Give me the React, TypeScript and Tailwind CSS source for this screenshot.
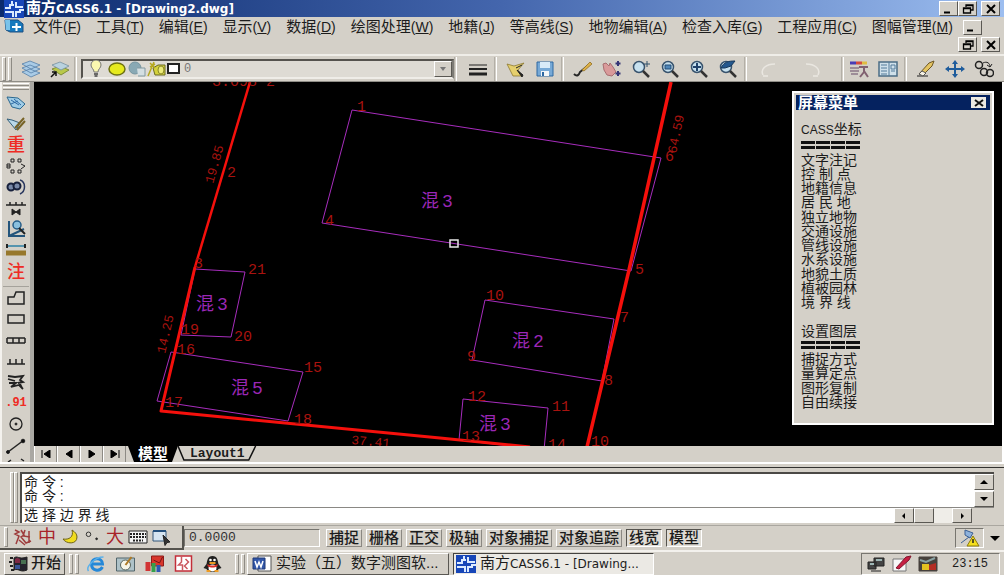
import { ReactNode } from "react";
import clsx from "clsx";

const menus: { name: string; hotkey: string }[] = [
	{ name: "文件", hotkey: "F" },
	{ name: "工具", hotkey: "T" },
	{ name: "编辑", hotkey: "E" },
	{ name: "显示", hotkey: "V" },
	{ name: "数据", hotkey: "D" },
	{ name: "绘图处理", hotkey: "W" },
	{ name: "地籍", hotkey: "J" },
	{ name: "等高线", hotkey: "S" },
	{ name: "地物编辑", hotkey: "A" },
	{ name: "检查入库", hotkey: "G" },
	{ name: "工程应用", hotkey: "C" },
	{ name: "图幅管理", hotkey: "M" },
];

const layerItems = [
	"文字注记",
	"控 制 点",
	"地籍信息",
	"居 民 地",
	"独立地物",
	"交通设施",
	"管线设施",
	"水系设施",
	"地貌土质",
	"植被园林",
	"境 界 线",
];

const settingItems = ["捕捉方式", "量算定点", "图形复制", "自由续接"];

const modes = [
	{ name: "捕捉", on: false },
	{ name: "栅格", on: false },
	{ name: "正交", on: false },
	{ name: "极轴", on: false },
	{ name: "对象捕捉", on: false },
	{ name: "对象追踪", on: false },
	{ name: "线宽", on: true },
	{ name: "模型", on: true },
];

const buildings = [
	{ points: "352,110 661,158 631,271 322,223", label: "混3", x: 421, y: 207 },
	{ points: "195,269 245,272 231,337 181,335", label: "混3", x: 196, y: 310 },
	{ points: "171,352 303,372 288,421 157,401", label: "混5", x: 231, y: 394 },
	{ points: "485,300 614,319 602,381 472,360", label: "混2", x: 512, y: 347 },
	{ points: "463,399 548,408 544,450 459,440", label: "混3", x: 479, y: 430 },
];

const pointLabels: [string, number, number][] = [
	["1", 357, 111],
	["4", 325, 225],
	["6", 665, 161],
	["5", 635, 274],
	["7", 620, 322],
	["8", 604, 385],
	["9", 467, 361],
	["10", 486, 300],
	["11", 552, 411],
	["12", 468, 401],
	["13", 462, 441],
	["14", 548, 449],
	["10", 591, 446],
	["15", 304, 372],
	["16", 177, 354],
	["17", 165, 407],
	["18", 294, 424],
	["19", 181, 334],
	["20", 234, 341],
	["21", 248, 274],
	["3", 194, 268],
	["2", 227, 177],
];

const raised =
	"border border-t-white border-l-white border-r-[#5a5853] border-b-[#5a5853] bg-[#d4d0c8]";
const sunken =
	"border border-t-[#77756f] border-l-[#77756f] border-r-white border-b-white";

function Icon({ children, className }: { children: ReactNode; className?: string }) {
	return (
		<svg
			viewBox="0 0 20 18"
			fill="none"
			stroke="#222"
			className={clsx("h-[18px] w-5 shrink-0", className)}
			aria-hidden="true"
		>
			{children}
		</svg>
	);
}

function CassLogo() {
	return (
		<Icon className="h-4">
			<rect width="20" height="18" fill="#1746b8" stroke="none" />
			<path d="M1 8h5V5h4M8 1v5M12 2v5h7M1 12h8v5M12 11v6M12 12h4v-2h4" stroke="#dbeaff" strokeWidth="2" />
		</Icon>
	);
}

function WindowButton({ kind, label }: { kind: "min" | "restore" | "close"; label: string }) {
	return (
		<button aria-label={label} className={clsx(raised, "flex h-[15px] w-[19px] items-center justify-center")}>
			<svg viewBox="0 0 12 10" className="h-2.5 w-3" fill="none" stroke="#000">
				{kind === "min" && <path d="M1 8.5h6" strokeWidth="2" />}
				{kind === "restore" && (
					<path d="M4 3V1h7v5H9M4 1.5h7M1.500 4h7v5h-7zM1.500 4.500h7" strokeWidth="1.300" />
				)}
				{kind === "close" && <path d="M2 1l8 8M10 1L2 9" strokeWidth="2" />}
			</svg>
		</button>
	);
}

function TitleBar() {
	return (
		<header className="flex h-[17px] shrink-0 items-center bg-linear-to-r from-[#0b2a6d] via-[#4466ad] to-[#9dbef0] pr-1 pl-1 text-white">
			<CassLogo />
			<h1 className="ml-0.5 flex-1 text-[15px] leading-4 font-bold whitespace-nowrap">
				南方<span className="font-['DejaVu_Sans'] text-xs">CASS6.1 - [Drawing2.dwg]</span>
			</h1>
			<WindowButton kind="min" label="最小化" />
			<WindowButton kind="restore" label="还原" />
			<span className="w-1" />
			<WindowButton kind="close" label="关闭" />
		</header>
	);
}

function MenuBar() {
	return (
		<nav className="flex shrink-0 flex-col pb-px pl-1">
			<div className="flex h-5 items-center">
				<Icon>
					<path d="M1 2h13l5 4v8H6L2 12z" fill="#1679bd" stroke="#1c4f80" />
					<path d="M1 2h5v10H2z" fill="#79c3ea" stroke="none" />
					<path d="M8 9h9M12.500 5v8" stroke="#fff" strokeWidth="2" />
				</Icon>
				<ul className="ml-[9px] flex gap-[15px]">
					{menus.map((menu) => (
						<li key={menu.name}>
							<button className="text-[15px] leading-5 whitespace-nowrap">
								{menu.name}
								<span className="text-sm">
									(<u>{menu.hotkey}</u>)
								</span>
							</button>
						</li>
					))}
				</ul>
				<span className="ml-2.5">
					<WindowButton kind="min" label="最小化图形" />
				</span>
			</div>
			<div className="flex h-4 justify-end gap-1 pr-1">
				<WindowButton kind="restore" label="还原图形" />
				<WindowButton kind="close" label="关闭图形" />
			</div>
		</nav>
	);
}

function Divider() {
	return <span className="h-6 w-[3px] shrink-0 border-r border-l border-r-white border-l-[#b3afa7]" />;
}

function Grip({ className }: { className?: string }) {
	return (
		<span
			className={clsx(
				"w-1 shrink-0 border border-t-white border-r-[#8e8b84] border-b-[#8e8b84] border-l-white",
				className
			)}
		/>
	);
}

function ToolButton({ label, children }: { label: string; children: ReactNode }) {
	return (
		<button aria-label={label} className="flex h-6 w-[29px] shrink-0 items-center justify-center">
			<Icon>{children}</Icon>
		</button>
	);
}

function Lens({ children }: { children?: ReactNode }) {
	return (
		<>
			<circle cx="8" cy="7" r="5.500" fill="#c7e1ef" stroke="#38536d" strokeWidth="1.500" />
			<path d="M12 11l6 6" stroke="#333" strokeWidth="2.500" />
			{children}
		</>
	);
}

function Toolbar() {
	return (
		<div className="flex h-7 shrink-0 items-center overflow-hidden border-t-2 border-t-[#efede8] border-b border-b-[#8f8d87]">
			<Grip className="ml-0.5 h-6" />
			<Grip className="ml-0.5 h-6" />
			<span className="w-1" />
			<ToolButton label="图层">
				<path d="M1 12l8-3 10 4-9 4zM1 8l8-3 10 4-9 4zM1 4l8-3 10 4-9 4z" fill="#a9cbe6" stroke="#557fa8" strokeWidth=".8" />
			</ToolButton>
			<ToolButton label="上一图层">
				<path d="M2 9l8-3 9 4-8 5z" fill="#b9c84a" stroke="#6f7f2a" strokeWidth=".8" />
				<path d="M2 5l8-3 9 4-8 4z" fill="#b9d2df" stroke="#76909f" strokeWidth=".8" />
				<path d="M1 17l5-5M2 12h4v4" stroke="#111" strokeWidth="1.500" />
			</ToolButton>
			<Divider />
			<div className="ml-1 flex h-5 w-[373px] shrink-0 items-center border-2 border-t-[#55534e] border-r-[#7d7b75] border-b-[#efede8] border-l-[#55534e] bg-[#dedbd4] pl-1">
				<Icon>
					<path d="M7 12c0-3-3-4-3-7a5 5 0 0110 0c0 3-3 4-3 7z" fill="#fbf8b0" stroke="#777" />
					<path d="M7 14h4M7.500 16h3" stroke="#444" strokeWidth="1.500" />
				</Icon>
				<Icon>
					<ellipse cx="10" cy="9" rx="8" ry="6" fill="#e6ea1e" stroke="#6e7210" strokeWidth="1.500" />
				</Icon>
				<Icon>
					<circle cx="8" cy="8" r="6" fill="#89a9b4" stroke="#7695a0" />
					<path d="M10 8h8v8h-7" fill="#d4dfe2" stroke="#8299a0" />
				</Icon>
				<Icon>
					<path d="M6 8l5-3h7v10H8z" fill="#d4d23c" stroke="#6b6a22" />
					<path d="M1 16L7 2M3 7l5-3M3 3l5 5" stroke="#b5a820" strokeWidth="1.500" />
					<ellipse cx="14" cy="10" rx="3" ry="4" fill="#eceb7a" stroke="#8a8828" />
				</Icon>
				<span className="h-[11px] w-[13px] border-2 border-[#222] bg-white" />
				<select aria-label="当前图层" className="ml-1 min-w-0 flex-1 appearance-none font-['Liberation_Mono'] text-xs text-[#777]">
					<option>0</option>
				</select>
				<span className={clsx(raised, "flex h-4 w-[18px] items-center justify-center")}>
					<svg viewBox="0 0 6 4" className="h-1 w-1.5" fill="#777">
						<path d="M0 0h6L3 4z" />
					</svg>
				</span>
			</div>
			<Divider />
			<span className="w-1.5" />
			<ToolButton label="线宽">
				<path d="M1 5h18" strokeWidth="1" />
				<path d="M1 9h18" strokeWidth="2" />
				<path d="M1 14h18" strokeWidth="3" />
			</ToolButton>
			<span className="w-0.5" />
			<Divider />
			<span className="w-1" />
			<ToolButton label="打开">
				<path d="M1 4l7 2 10-3-6 7 4 6H7z" fill="#e5cf6d" stroke="#8d7a34" strokeWidth=".8" />
				<path d="M10 8l6-3M11 10l6 5-1 2z" fill="#222" />
			</ToolButton>
			<ToolButton label="保存">
				<path d="M2 2h16v14H2z" fill="#77a9d6" stroke="#2e68a2" />
				<path d="M5 2h10v6H5z" fill="#d9ebf8" stroke="none" />
				<path d="M6 11h8v5H6z" fill="#f3f6f8" stroke="none" />
				<path d="M8 12v4" stroke="#2e68a2" strokeWidth="2" />
			</ToolButton>
			<span className="w-0.5" />
			<Divider />
			<span className="w-1" />
			<ToolButton label="特性匹配">
				<path d="M1 14c3 3 5 1 6-2L18 3" stroke="#252525" strokeWidth="2" />
				<path d="M9 10l8-8 2 2-8 7z" fill="#ddb149" stroke="#96742a" strokeWidth=".8" />
			</ToolButton>
			<ToolButton label="实时平移">
				<path d="M1 4l3-1 3 3 1-3 3 4 3 5-4 4-5-1-3-5z" fill="#d99a9a" stroke="#a86e70" />
				<path d="M16 1v5M13.500 3.500h5M16 11v5M13.500 13.500h5" stroke="#353576" strokeWidth="2" />
			</ToolButton>
			<ToolButton label="实时缩放">
				<Lens>
					<path d="M13 4h6M16 1v6" stroke="#31506b" />
				</Lens>
			</ToolButton>
			<ToolButton label="窗口缩放">
				<Lens>
					<path d="M5 5h6v4H5z" fill="#4f86b8" stroke="#224d77" />
				</Lens>
			</ToolButton>
			<ToolButton label="全部缩放">
				<Lens>
					<path d="M4 7h8M8 3v8" stroke="#20426b" strokeWidth="2" />
				</Lens>
			</ToolButton>
			<ToolButton label="上一个缩放">
				<Lens>
					<path d="M3 8c3-6 7-7 14-7l-4 5-6 2z" fill="#24588e" stroke="#17395c" />
				</Lens>
			</ToolButton>
			<span className="w-0.5" />
			<Divider />
			<span className="w-2" />
			<ToolButton label="放弃">
				<path d="M3 15c-3-6 3-11 12-11M3 16h5" stroke="#eae7e1" strokeWidth="1.500" />
			</ToolButton>
			<span className="w-3" />
			<ToolButton label="重做">
				<path d="M17 15c3-6-3-11-12-11M17 16h-5" stroke="#eae7e1" strokeWidth="1.500" />
			</ToolButton>
			<span className="w-4" />
			<Divider />
			<ToolButton label="特性">
				<path d="M1 3h6" stroke="#4a3db5" strokeWidth="3" />
				<path d="M7 3h6" stroke="#d64b3d" strokeWidth="3" />
				<path d="M13 3h5" stroke="#e0bc42" strokeWidth="3" />
				<path d="M1 8h9M1 11h9M2 14h7" stroke="#8b7788" strokeWidth="1.500" />
				<path d="M10 7h9M15 8v4l-4 5M15 11l4 6" stroke="#806070" strokeWidth="2" />
			</ToolButton>
			<ToolButton label="设计中心">
				<path d="M1 2h18v14H1z" fill="#cfe0ea" stroke="#4b6c85" strokeWidth="1.500" />
				<path d="M3 5h6M3 8h6M3 11h6M3 14h6M11 2v14M13 5h4v4h-4zM13 11h4" stroke="#527b9a" />
			</ToolButton>
			<span className="w-0.5" />
			<Divider />
			<span className="w-1" />
			<ToolButton label="删除">
				<path d="M1 16h11" />
				<path d="M3 14L13 3l5-2-2 5-9 9z" fill="#e4c463" stroke="#6c5624" />
				<path d="M3 14l3-3 4 2-3 3z" fill="#f7f3e5" stroke="#555" />
			</ToolButton>
			<ToolButton label="移动">
				<path d="M2 9h16M10 2v14" stroke="#1e5c9c" strokeWidth="2" />
				<path d="M0 9l4-3v6zM20 9l-4-3v6zM10 0L7 4h6zM10 18l-3-4h6z" fill="#1e5c9c" stroke="none" />
			</ToolButton>
			<ToolButton label="复制">
				<circle cx="5" cy="5" r="3.500" strokeWidth="1.500" />
				<circle cx="10" cy="12" r="3.500" strokeWidth="1.500" />
				<circle cx="16" cy="13" r="3.500" strokeWidth="1.500" />
				<path d="M9 3c4-2 7 0 7 4M13 5l3 2 2-3" />
			</ToolButton>
		</div>
	);
}

const sideTools: { label: string; icon: ReactNode }[] = [
	{
		label: "查询",
		icon: (
			<>
				<path d="M1 3l11 1 7 6-5 5-8-2z" fill="#9fcce6" stroke="#2b688f" />
				<path d="M5 6l8 5M8 5l7 6M5 10l7-3" stroke="#2e6aa5" />
			</>
		),
	},
	{
		label: "编辑实体",
		icon: (
			<>
				<path d="M1 4l5 1 8 3-4 7z" fill="#b9d8e8" stroke="#35607a" />
				<path d="M9 13l9-10M11 15l8-9" stroke="#776326" strokeWidth="2" />
			</>
		),
	},
	{ label: "重构", icon: "重" },
	{
		label: "阵列",
		icon: (
			<path d="M5 2h3v3H5zM12 2h3v3h-3zM5 13h3v3H5zM12 13h3v3h-3zM1 7h3v4H1zM15 7l4 2-4 3M1 9h3" />
		),
	},
	{
		label: "批量选取",
		icon: (
			<>
				<circle cx="5" cy="9" r="3.500" fill="#7788a8" stroke="#17203c" strokeWidth="2" />
				<circle cx="11" cy="8" r="3.500" fill="#7788a8" stroke="#17203c" strokeWidth="2" />
				<path d="M14 2c6 2 6 11 0 14" stroke="#29375e" strokeWidth="1.500" />
			</>
		),
	},
	{
		label: "坎线",
		icon: (
			<>
				<path d="M0 6h20M4 3v3M10 3v3M16 3v3" strokeWidth="1.500" />
				<path d="M6 10v6l4-3 4 3v-6l-4 3z" fill="#222" />
			</>
		),
	},
	{
		label: "坐标查询",
		icon: (
			<>
				<path d="M3 1v15h16M3 16L18 9" stroke="#24557c" strokeWidth="2" />
				<circle cx="11" cy="5" r="4" fill="#8bc0de" stroke="#275d88" strokeWidth="1.500" />
				<path d="M13 8l6 6" stroke="#222" strokeWidth="2" />
			</>
		),
	},
	{
		label: "距离",
		icon: (
			<>
				<path d="M1 5h18" stroke="#5694ae" strokeWidth="2" />
				<path d="M1 3v4M19 3v4" strokeWidth="2" />
				<path d="M0 12h20" stroke="#97782b" strokeWidth="5" />
			</>
		),
	},
	{ label: "注记", icon: "注" },
	{
		label: "多边形房屋",
		icon: <path d="M2 15V8h6l2-5h8v12z" strokeWidth="1.500" />,
	},
	{
		label: "四点房屋",
		icon: <path d="M2 5h16v8H2z" strokeWidth="1.500" />,
	},
	{
		label: "围墙",
		icon: <path d="M1 7h18M1 12h18M1 7v5M7 7v5M13 7v5M19 7v5" strokeWidth="1.500" />,
	},
	{
		label: "陡坎",
		icon: <path d="M1 12h18M4 7v5M10 7v5M16 7v5" strokeWidth="1.500" />,
	},
	{
		label: "曲线",
		icon: (
			<path d="M2 3l7 1 8-1-3 4 3 2-5 1M2 6l7 2M3 10h7l-5 4 8-2 4 4M13 9l3 6" strokeWidth="1.800" />
		),
	},
	{ label: "高程点", icon: ".91" },
	{
		label: "图根点",
		icon: (
			<>
				<circle cx="10" cy="9" r="6" strokeWidth="1.300" />
				<circle cx="10" cy="9" r="1" fill="#222" />
			</>
		),
	},
	{
		label: "线段",
		icon: (
			<>
				<path d="M2 15L18 3" strokeWidth="1.500" />
				<circle cx="2" cy="15" r="1.500" fill="#111" />
				<circle cx="17" cy="4" r="1.800" fill="#111" />
			</>
		),
	},
];

function SideToolbar() {
	return (
		<aside className="flex w-[34px] shrink-0 flex-col border-r-4 border-l-2 border-r-[#aaa8a3] border-l-[#f4f2ee] px-px">
			<span className="mt-px h-[3px] shrink-0 border-t border-b border-t-white border-b-[#8e8b84]" />
			<span className="mt-px mb-0.5 h-[3px] shrink-0 border-t border-b border-t-white border-b-[#8e8b84]" />
			{sideTools.map((tool, index) => (
				<button
					key={tool.label}
					aria-label={tool.label}
					className={clsx(
						"flex min-h-0 flex-1 items-center justify-center",
						index === 9 && "mt-1 border-t border-t-[#a5a29b]"
					)}
				>
					{typeof tool.icon === "string" ? (
						<span
							className={clsx(
								"leading-4 text-[#ee2b24]",
								tool.icon === ".91" ? "font-['Liberation_Mono'] text-xs font-bold" : "text-lg font-medium"
							)}
						>
							{tool.icon}
						</span>
					) : (
						<Icon>{tool.icon}</Icon>
					)}
				</button>
			))}
			<svg viewBox="0 0 20 6" className="h-1.5 w-full shrink-0" fill="none" stroke="#222" strokeWidth="1.500">
				<path d="M2 6l3-2M15 3l3 2" />
			</svg>
		</aside>
	);
}

function Drawing() {
	return (
		<svg
			viewBox="34 82 968 364"
			preserveAspectRatio="xMinYMin slice"
			className="absolute inset-0 h-full w-full"
			fill="none"
			role="img"
			aria-label="Drawing2"
		>
			<g stroke="#a72dbd" strokeWidth="1">
				{buildings.map((building) => (
					<polygon key={building.points} points={building.points} />
				))}
			</g>
			<g stroke="#f5100c" strokeLinejoin="round">
				<path d="M250 82L195 267" strokeWidth="2.500" />
				<path d="M195 267L161 411L440 438L530 447" strokeWidth="3" />
				<path d="M671 82L629 270L587 447" strokeWidth="3.500" />
			</g>
			<g fill="#9a27b6" className="font-['Liberation_Sans','Noto_Sans_CJK_SC',sans-serif] text-lg">
				{buildings.map((building) => (
					<text key={building.points} x={building.x} y={building.y}>
						{building.label[0]}
						<tspan dx="3" className="font-['Liberation_Mono']">
							{building.label[1]}
						</tspan>
					</text>
				))}
			</g>
			<g fill="#a8130f" className="font-['Liberation_Mono',monospace] text-[15px]">
				{pointLabels.map(([label, x, y]) => (
					<text key={`${label}-${x}`} x={x} y={y}>
						{label}
					</text>
				))}
				<text transform="translate(213 184) rotate(-74)" className="text-[13px]">
					19.85
				</text>
				<text transform="translate(676 154) rotate(-78)" className="text-[13px]">
					64.59
				</text>
				<text transform="translate(165 354) rotate(-77)" className="text-[13px]">
					14.25
				</text>
				<text transform="translate(351 444) rotate(5)" className="text-[13px]">
					37.41
				</text>
				<text x="212" y="86">
					3.098 2
				</text>
			</g>
			<rect x="450" y="240" width="8" height="7" stroke="#e8e8e8" strokeWidth="1.500" />
		</svg>
	);
}

function MenuRule() {
	return (
		<div className="flex gap-px py-[3px]" aria-hidden="true">
			{[0, 1, 2, 3].map((i) => (
				<span key={i} className="h-2 w-[14px] border-t-[3px] border-b-[3px] border-[#111]" />
			))}
		</div>
	);
}

function ScreenMenu() {
	return (
		<section className="absolute top-[9px] right-2 flex h-[334px] w-[202px] flex-col border-2 border-white bg-[#d4d0c8] p-0.5">
			<div className="flex h-[15px] shrink-0 items-center justify-between bg-[#05225f] pr-1 pl-0.5 text-white">
				<h2 className="text-[15px] leading-[15px] font-bold">屏幕菜单</h2>
				<button aria-label="关闭屏幕菜单" className="flex h-[11px] w-[15px] items-center justify-center bg-[#ece9e2]">
					<svg viewBox="0 0 10 8" className="h-2 w-2.5" stroke="#111" strokeWidth="2">
						<path d="M1 1l8 6M9 1L1 7" />
					</svg>
				</button>
			</div>
			<div className="mt-3 mb-3 flex min-h-0 flex-1 flex-col items-start justify-between pl-[5px] text-sm leading-[14px]">
				<button>
					<span className="text-xs">CASS</span>坐标
				</button>
				<MenuRule />
				{layerItems.map((item) => (
					<button key={item}>{item}</button>
				))}
				<span className="h-[14px]" />
				<button>设置图层</button>
				<MenuRule />
				{settingItems.map((item) => (
					<button key={item}>{item}</button>
				))}
			</div>
		</section>
	);
}

function LayoutTabs() {
	const arrows = [
		{ label: "第一个", d: "M1 0v8M9 0v8L3 4z" },
		{ label: "上一个", d: "M8 0v8L2 4z" },
		{ label: "下一个", d: "M2 0v8l6-4z" },
		{ label: "最后一个", d: "M1 0v8l6-4zM9 0v8" },
	];
	return (
		<div className="flex h-4 shrink-0 items-stretch bg-[#d4d0c8]">
			{arrows.map((arrow) => (
				<button
					key={arrow.label}
					aria-label={arrow.label}
					className="flex w-[23px] items-center justify-center border-r border-r-[#8d8a84] border-l border-l-white"
				>
					<svg viewBox="0 0 10 8" className="h-2 w-2.5" fill="#000" stroke="#000">
						<path d={arrow.d} />
					</svg>
				</button>
			))}
			<button className="ml-0.5 bg-black px-2.5 text-[15px] leading-4 font-bold text-white [clip-path:polygon(0_0,100%_0,88%_100%,12%_100%)]">
				模型
			</button>
			<button className="relative px-3 font-['Liberation_Mono'] text-[13px] leading-4 font-bold">
				<svg viewBox="0 0 80 16" preserveAspectRatio="none" className="absolute inset-0 h-full w-full" fill="none" stroke="#111" strokeWidth="1.500">
					<path d="M0 0l6 14h66l7-14" />
				</svg>
				Layout1
			</button>
		</div>
	);
}

function ScrollArrow({ d, label, className }: { d: string; label: string; className: string }) {
	return (
		<button aria-label={label} className={clsx(raised, "flex items-center justify-center", className)}>
			<svg viewBox="0 0 8 8" className="h-2 w-2" fill="#000">
				<path d={d} />
			</svg>
		</button>
	);
}

function CommandLine() {
	return (
		<section className="flex shrink-0 border-t border-t-[#33322f] pt-1 pr-2.5 pb-0.5 pl-2.5">
			<Grip />
			<Grip className="mr-0.5" />
			<div className="min-w-0 flex-1 border-t-2 border-l-2 border-[#4b4946] bg-white text-sm">
				<div className="flex h-[34px] border-b border-b-[#8a8884]">
					<div className="flex-1 pt-px pl-0.5 leading-[14px]">
						<p>命 令 :</p>
						<p>命 令 :</p>
					</div>
					<div className="flex flex-col justify-between">
						<ScrollArrow label="向上" d="M4 2L0 6h8z" className="h-4 w-5" />
						<ScrollArrow label="向下" d="M4 6L0 2h8z" className="h-4 w-5" />
					</div>
				</div>
				<div className="flex h-[15px]">
					<input
						aria-label="命令行"
						defaultValue="选 择 边 界 线"
						className="min-w-0 flex-1 pl-0.5 leading-[15px] outline-none"
					/>
					<div className="flex bg-[#efede8]">
						<ScrollArrow label="向左" d="M2 4l3-3v6z" className="h-[15px] w-5" />
						<span className={clsx(raised, "h-[15px] w-5")} />
						<span className="w-[18px]" />
						<ScrollArrow label="向右" d="M6 4L3 1v6z" className="h-[15px] w-5" />
					</div>
					<span className="w-[22px] bg-[#d4d0c8]" />
				</div>
			</div>
		</section>
	);
}

function StatusBar() {
	return (
		<div className="flex h-[25px] shrink-0 items-center border-t border-t-[#aaa7a0]">
			<div className="flex h-full w-[184px] shrink-0 items-center gap-1 border-r-2 border-b-2 border-[#55534e] pl-1 text-[#a8232a]">
				<Grip className="h-5" />
				<Icon className="w-[22px]">
					<path d="M2 2l4 2-4 2 4 2-3 8M8 2l3 5-3 2 5 6 5-2M12 2l-2 6 7 1M16 3v12M6 12l6 5" stroke="#9e3d3d" strokeWidth="1.500" />
				</Icon>
				<button className="text-lg leading-5">中</button>
				<Icon>
					<path d="M12 2c2 7-3 10-9 9 3 5 14 6 14-2 0-3-2-5-5-7z" fill="#f0dc20" stroke="#6f6417" />
				</Icon>
				<Icon className="w-[18px]">
					<circle cx="5" cy="6" r="2.500" />
					<circle cx="14" cy="11" r="1" fill="#222" />
				</Icon>
				<button className="text-lg leading-5">大</button>
				<Icon>
					<path d="M1 3h18v12H1z" fill="#f4f4f4" />
					<path d="M2 6h16M2 9h16M5 12.500h10" strokeDasharray="2 1" strokeWidth="2" />
				</Icon>
				<Icon>
					<path d="M1 3h13v10H1z" fill="#d6e5f1" stroke="#345678" />
					<path d="M1 3h13" stroke="#24507d" strokeWidth="2" />
					<path d="M11 7l7 7-3 .5-2 3z" fill="#333" />
				</Icon>
			</div>
			<output className={clsx(sunken, "h-[18px] w-[136px] shrink-0 pl-1 font-['Liberation_Mono'] text-[13px] leading-4 text-[#333]")}>
				0.0000
			</output>
			<div className="ml-1.5 flex gap-1">
				{modes.map((mode) => (
					<button
						key={mode.name}
						aria-pressed={mode.on}
						className={clsx(
							"h-[18px] px-0.5 text-[15px] leading-4 font-medium whitespace-nowrap",
							mode.on
								? "border border-t-[#55534e] border-r-white border-b-white border-l-[#55534e] bg-[#e0ddd6]"
								: "border border-t-white border-r-[#8b8882] border-b-[#8b8882] border-l-white"
						)}
					>
						{mode.name}
					</button>
				))}
			</div>
			<div className="ml-auto flex items-center gap-1.5 pr-1">
				<span className={clsx(sunken, "flex h-5 w-[29px] items-center justify-center")}>
					<Icon>
						<path d="M5 1l8 3-3 5-5-3zM1 14l8-6" fill="#8eb2dc" stroke="#3a5f94" />
						<path d="M13 7l6 10H7z" fill="#f5df1e" stroke="#8c7a10" />
						<path d="M13 10v4" strokeWidth="1.500" />
					</Icon>
				</span>
				<button aria-label="状态栏菜单">
					<svg viewBox="0 0 10 6" className="h-1.5 w-2.5" fill="#000">
						<path d="M0 1h10L5 6z" />
					</svg>
				</button>
			</div>
		</div>
	);
}

function Taskbar() {
	return (
		<footer className="flex h-[25px] shrink-0 items-center border-t-2 border-t-[#f3f1ed] pr-1 pl-1">
			<button className={clsx(raised, "flex h-[22px] w-[61px] items-center text-[15px] font-medium")}>
				<Icon className="ml-0.5 w-6">
					<path d="M1 3h3M0 7h3M1 11h3M2 15h3" strokeWidth="2" />
					<path d="M5 3c4-3 4 2 13-1v13c-7 3-8-2-13 0z" fill="#24232d" />
					<path d="M6 4c3-2 4 0 5 0v4H6z" fill="#7d2944" stroke="none" />
					<path d="M12 5h5v4h-5z" fill="#477051" stroke="none" />
					<path d="M6 10h5v4H6z" fill="#385395" stroke="none" />
				</Icon>
				开始
			</button>
			<Grip className="ml-1 h-5" />
			<Grip className="ml-0.5 h-5" />
			<span className="w-[7px]" />
			<div className="flex gap-2">
				<button aria-label="Internet Explorer">
					<Icon className="w-[21px]">
						<path d="M16 12c-3 5-11 4-11-3s11-7 11 0H6" stroke="#2588d8" strokeWidth="3" />
						<path d="M2 16C-1 12 8 2 17 2" stroke="#5bb1ea" strokeWidth="1.500" />
					</Icon>
				</button>
				<button aria-label="显示桌面">
					<Icon className="w-[21px]">
						<path d="M1 3h18v13H1z" fill="#aec2c8" stroke="#51656b" />
						<circle cx="10" cy="10" r="5" fill="#f7f6e8" stroke="#57645c" />
						<path d="M10 10l6-8" stroke="#ad7a25" strokeWidth="2" />
					</Icon>
				</button>
				<button aria-label="Office">
					<Icon className="w-[21px]">
						<path d="M7 1h12v10H7z" fill="#d8362b" stroke="#8e1a17" />
						<path d="M1 7h5v9H1z" fill="#d23535" stroke="none" />
						<path d="M7 8h4v9H7z" fill="#35a04c" stroke="none" />
						<path d="M12 10h4v7h-4z" fill="#2d58b3" stroke="none" />
						<path d="M9 5l6 3 3-6" stroke="#741414" />
					</Icon>
				</button>
				<button aria-label="CAD">
					<Icon className="w-[21px]">
						<path d="M2 1h16v15H2z" fill="#fff" stroke="#c32e38" strokeWidth="1.500" />
						<path d="M8 1v6l-3 3h4v6M12 4l3 3-4 4 3 3" stroke="#cb5960" strokeWidth="1.500" />
					</Icon>
				</button>
				<button aria-label="QQ">
					<Icon className="w-[21px]">
						<path d="M10 1c5 0 5 4 6 8l3 4-3 1-2 3H6l-2-3-3-1 3-4c1-4 1-8 6-8z" fill="#20201f" stroke="none" />
						<ellipse cx="10" cy="13" rx="4" ry="3.500" fill="#fff" stroke="none" />
						<path d="M5 9c3 2 7 2 10 0v2c-3 2-7 2-10 0z" fill="#db2b24" stroke="none" />
						<circle cx="8" cy="5" r="1.300" fill="#fff" stroke="none" />
						<circle cx="12" cy="5" r="1.300" fill="#fff" stroke="none" />
						<path d="M7 8h6M4 16h4M12 16h4" stroke="#ed9b22" strokeWidth="2" />
					</Icon>
				</button>
			</div>
			<span className="w-3" />
			<Grip className="h-5" />
			<Grip className="mr-0.5 ml-0.5 h-5" />
			<button className={clsx(raised, "flex h-[22px] w-[202px] items-center gap-1 pl-1 text-[15px] whitespace-nowrap")}>
				<Icon>
					<path d="M6 1h13v15H6z" fill="#fff" stroke="#555" />
					<path d="M1 3h12v11H1z" fill="#3156a8" stroke="#1f3877" />
					<path d="M3 6l2 6 2-5 2 5 2-6" stroke="#fff" strokeWidth="1.500" />
				</Icon>
				实验（五）数字测图软...
			</button>
			<button
				aria-pressed="true"
				className="ml-1 flex h-[22px] w-[201px] items-center gap-1 border border-t-[#44423f] border-r-white border-b-white border-l-[#44423f] bg-[#ebe9e4] pl-0.5 text-[15px] whitespace-nowrap"
			>
				<CassLogo />
				<span>
					南方<span className="font-['DejaVu_Sans'] text-xs">CASS6.1 - [Drawing...</span>
				</span>
			</button>
			<div className={clsx(sunken, "ml-auto flex h-[22px] w-[139px] items-center gap-1.5 pl-1")}>
				<Icon>
					<path d="M2 7h8v7H2zM8 3h10v8H8z" fill="#444" />
					<path d="M4 9h4M10 5h6" stroke="#9db6b5" strokeWidth="2" />
					<path d="M5 16h10" />
				</Icon>
				<Icon>
					<path d="M1 4h13v12H1z" fill="#f7f7f7" stroke="#777" />
					<path d="M4 13L14 2l5-1-2 4L7 14z" fill="#c71f43" stroke="#80152c" />
				</Icon>
				<Icon>
					<path d="M1 2h18v14H1z" fill="#47413c" stroke="#47413c" />
					<path d="M2 5l6 2 9-4" stroke="#89a2a3" strokeWidth="2" />
					<path d="M4 9h7v6H4z" fill="#e4c221" stroke="none" />
					<path d="M11 10l7-2v7h-7z" fill="#b42d24" stroke="none" />
				</Icon>
				<time className="ml-2 font-['Liberation_Mono'] text-xs">23:15</time>
			</div>
		</footer>
	);
}

export default function App() {
	return (
		<div className="flex h-screen flex-col overflow-hidden bg-[#d4d0c8] font-['Liberation_Sans','Noto_Sans_CJK_SC',sans-serif] text-[#1c1c1c]">
			<TitleBar />
			<MenuBar />
			<Toolbar />
			<main className="flex min-h-0 flex-1">
				<SideToolbar />
				<div className="flex min-w-0 flex-1 flex-col border-r-2 border-r-white">
					<div className="relative min-h-0 flex-1 overflow-hidden bg-black">
						<Drawing />
						<ScreenMenu />
					</div>
					<LayoutTabs />
				</div>
			</main>
			<div className="h-[5px] shrink-0 border-t-2 border-t-white" />
			<CommandLine />
			<StatusBar />
			<Taskbar />
		</div>
	);
}
